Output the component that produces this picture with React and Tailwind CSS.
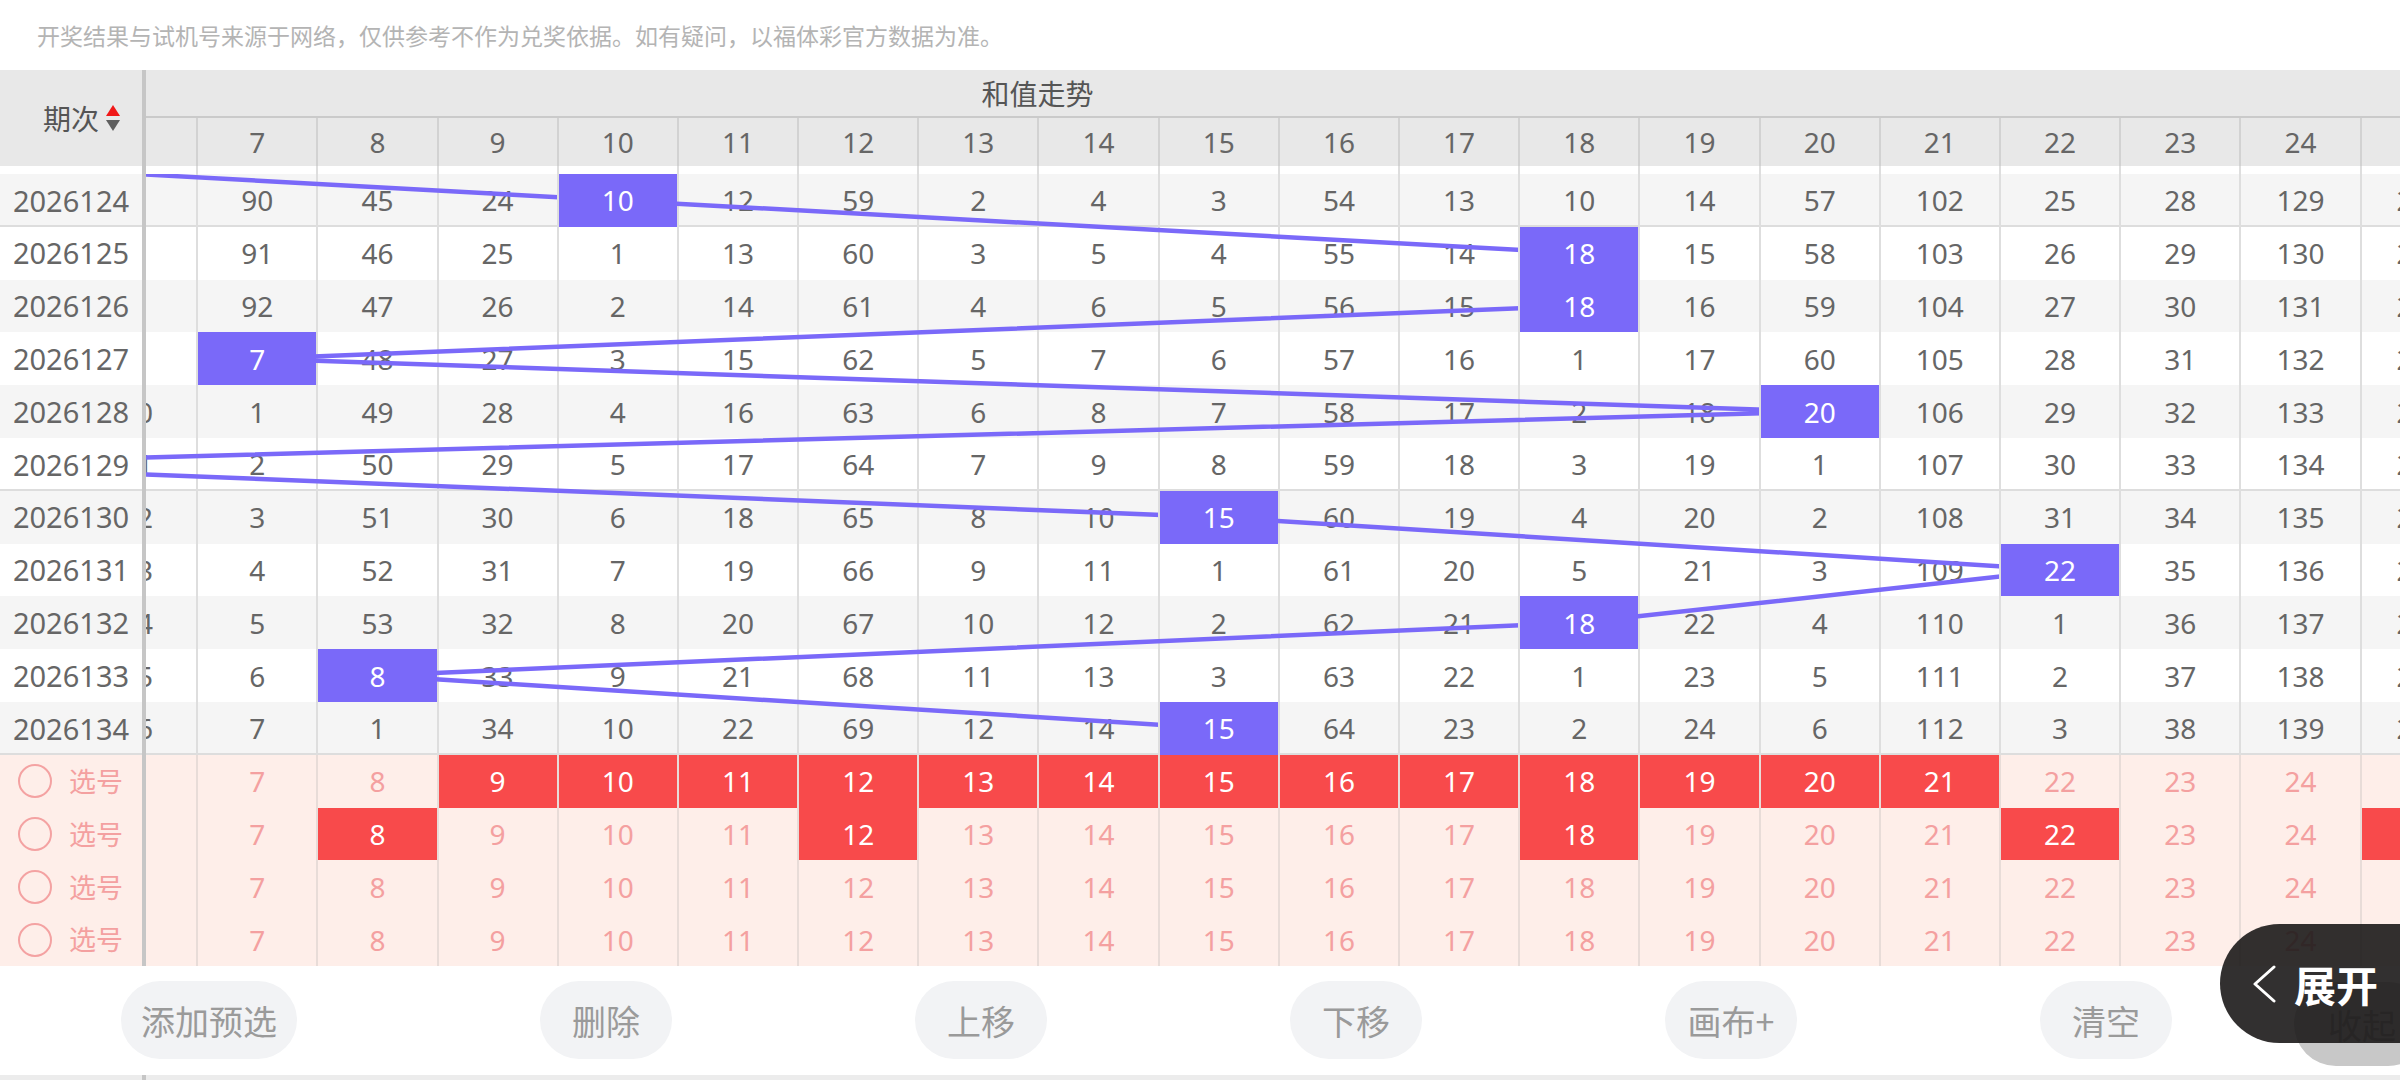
import React from "react";

const COLS = Array.from({ length: 28 }, (_, i) => i);
const COL_W = 120.2;
const ROW_H = 52.8;

const ISSUES = [
  2026124, 2026125, 2026126, 2026127, 2026128, 2026129, 2026130, 2026131,
  2026132, 2026133, 2026134,
];
const SUMS = [10, 18, 18, 7, 20, 4, 15, 22, 18, 8, 15];

// omission counts after 2026123 (sum 2)
const START = [
  299, 179, 0, 69, 32, 18, 5, 89, 44, 23, 9, 11, 58, 1, 3, 2, 53, 12, 9, 13,
  56, 101, 24, 27, 128, 205, 379, 811,
];

const PICKS = [
  [9, 10, 11, 12, 13, 14, 15, 16, 17, 18, 19, 20, 21],
  [8, 12, 18, 22, 25],
  [],
  [],
];

const BUTTONS = ["添加预选", "删除", "上移", "下移", "画布+", "清空"];

// columns scrolled fully out of view keep their cells but no text
const shown = (c) => c >= 6 && c <= 25;

const buildRows = () => {
  let prev = START;
  return ISSUES.map((issue, i) => {
    const cur = prev.map((v) => v + 1);
    cur[SUMS[i]] = 0;
    prev = cur;
    return { issue, sum: SUMS[i], cells: cur };
  });
};

const rows = buildRows();

const points = [{ c: 2, r: -1 }, ...SUMS.map((c, r) => ({ c, r }))]
  .map(({ c, r }) => `${c * COL_W + COL_W / 2},${r * ROW_H + ROW_H / 2}`)
  .join(" ");

const SortIcon = () => (
  <div className="flex flex-col gap-[4px]">
    <svg width="14" height="11" viewBox="0 0 14 11">
      <polygon points="7,0 14,11 0,11" fill="#f01818" />
    </svg>
    <svg width="14" height="11" viewBox="0 0 14 11">
      <polygon points="0,0 14,0 7,11" fill="#5f5f5f" />
    </svg>
  </div>
);

const App = () => {
  return (
    <div className="relative w-full h-[1080px] overflow-hidden bg-white font-['Noto_Sans','Noto_Sans_CJK_SC',sans-serif]">
      {/* notice */}
      <div className="h-[70px] flex items-center pl-[37px] text-[23px] text-[#b4b4b4] font-['Noto_Sans_CJK_SC',sans-serif]">
        开奖结果与试机号来源于网络，仅供参考不作为兑奖依据。如有疑问，以福体彩官方数据为准。
      </div>

      {/* trend table */}
      <div className="flex">
        {/* fixed issue column */}
        <div className="relative z-20 w-[142px] shrink-0">
          <div className="h-[96px] bg-[#e8e8e8] flex items-center pl-[43px] gap-[7px]">
            <span className="text-[28px] text-[#555] font-['Noto_Sans_CJK_SC',sans-serif]">
              期次
            </span>
            <SortIcon />
          </div>
          <div className="h-[8px] bg-white" />
          {rows.map((row, i) => (
            <div
              key={row.issue}
              className={`h-[52.8px] flex items-center justify-center text-[29px] text-[#666] ${
                i % 2 === 0 ? "bg-[#f5f5f5]" : "bg-white"
              } ${i % 5 === 0 ? "shadow-[inset_0_-2px_0_#dddddd]" : ""}`}
            >
              {row.issue}
            </div>
          ))}
          {PICKS.map((_, i) => (
            <div
              key={i}
              className="h-[52.8px] flex items-center pl-[18px] gap-[17px] bg-[#feeee9]"
            >
              <span className="w-[34px] h-[34px] rounded-full border-2 border-[#f4a2a2]" />
              <span className="text-[27px] text-[#f4a0a0] font-['Noto_Sans_CJK_SC',sans-serif]">
                选号
              </span>
            </div>
          ))}
        </div>

        <div className="w-[4px] shrink-0 bg-[#c6c6c6]" />

        {/* scrolled trend area */}
        <div className="flex-1 min-w-0 overflow-hidden">
          <div className="w-[3365.6px] ml-[-791.2px]">
            <div className="bg-[#e8e8e8]">
              <div className="h-[46px] flex items-center justify-center text-[28px] text-[#555] font-['Noto_Sans_CJK_SC',sans-serif]">
                和值走势
              </div>
              <div className="h-[50px] flex border-t-2 border-[#cacaca]">
                {COLS.map((c) => (
                  <div
                    key={c}
                    className="w-[120.2px] shrink-0 border-l-2 border-[#d2d2d2] flex items-center justify-center text-[28px] text-[#666]"
                  >
                    {shown(c) ? c : ""}
                  </div>
                ))}
              </div>
            </div>

            <div className="h-[8px] flex bg-white">
              {COLS.map((c) => (
                <div key={c} className="w-[120.2px] shrink-0 border-l-2 border-[#dedede]" />
              ))}
            </div>

            <div className="relative">
              {rows.map((row, i) => (
                <div
                  key={row.issue}
                  className={`h-[52.8px] flex ${
                    i % 2 === 0 ? "bg-[#f5f5f5]" : "bg-white"
                  } ${i % 5 === 0 ? "shadow-[inset_0_-2px_0_#dddddd]" : ""}`}
                >
                  {row.cells.map((v, c) =>
                    c === row.sum ? (
                      <div
                        key={c}
                        className="relative z-10 w-[120.2px] shrink-0 border-l-2 border-[#dedede]"
                      >
                        <div className="h-full bg-[#7a69f9] flex items-center justify-center text-[28px] text-white">
                          {shown(c) ? row.sum : ""}
                        </div>
                      </div>
                    ) : (
                      <div
                        key={c}
                        className="w-[120.2px] shrink-0 border-l-2 border-[#dedede] flex items-center justify-center text-[28px] text-[#666]"
                      >
                        {shown(c) ? v : ""}
                      </div>
                    )
                  )}
                </div>
              ))}
              <svg
                className="absolute left-0 top-0 pointer-events-none"
                width={COLS.length * COL_W}
                height={rows.length * ROW_H}
              >
                <polyline
                  points={points}
                  fill="none"
                  stroke="#7a69f9"
                  strokeWidth="4.5"
                  strokeLinejoin="round"
                />
              </svg>
            </div>

            {PICKS.map((sel, i) => (
              <div key={i} className="h-[52.8px] flex bg-[#feeee9]">
                {COLS.map((c) =>
                  sel.includes(c) ? (
                    <div
                      key={c}
                      className="w-[120.2px] shrink-0 border-l-2 border-[#e8dcd8]"
                    >
                      <div className="h-full bg-[#f84a4b] flex items-center justify-center text-[28px] text-white">
                        {shown(c) ? c : ""}
                      </div>
                    </div>
                  ) : (
                    <div
                      key={c}
                      className="w-[120.2px] shrink-0 border-l-2 border-[#e8dcd8] flex items-center justify-center text-[28px] text-[#f4a0a0]"
                    >
                      {shown(c) ? c : ""}
                    </div>
                  )
                )}
              </div>
            ))}
          </div>
        </div>
      </div>

      {/* action bar */}
      <div className="h-[109px] flex items-center font-['Noto_Sans_CJK_SC',sans-serif]">
        {BUTTONS.map((b, i) => (
          <button
            key={b}
            className={`h-[78px] min-w-[132px] shrink-0 rounded-full bg-[#f2f3f5] text-[34px] text-[#9a9a9a] ${
              i === 0 ? "ml-[121px] px-[20px]" : "ml-[243px] px-[17px]"
            }`}
          >
            {b}
          </button>
        ))}
        <button className="h-[84px] mt-[8px] ml-[122px] min-w-[132px] px-[34px] shrink-0 rounded-full bg-[#c8c8c8] text-[34px] text-[#8a8a8a]">
          收起
        </button>
      </div>

      {/* bottom strip */}
      <div className="h-[5px] flex bg-[#ececec]">
        <div className="w-[142px]" />
        <div className="w-[4px] bg-[#c6c6c6]" />
      </div>

      {/* floating expand */}
      <div className="absolute right-0 top-[924px] z-30 h-[119px] w-[180px] rounded-l-full bg-[#1c1a1a]/90 flex items-center pl-[32px] gap-[18px] font-['Noto_Sans_CJK_SC',sans-serif]">
        <svg width="24" height="38" viewBox="0 0 24 38">
          <polyline
            points="22,2 3,19 22,36"
            fill="none"
            stroke="white"
            strokeWidth="3"
            strokeLinecap="round"
            strokeLinejoin="round"
          />
        </svg>
        <span className="text-[42px] font-bold text-white leading-none">展开</span>
      </div>
    </div>
  );
};

export default App;
